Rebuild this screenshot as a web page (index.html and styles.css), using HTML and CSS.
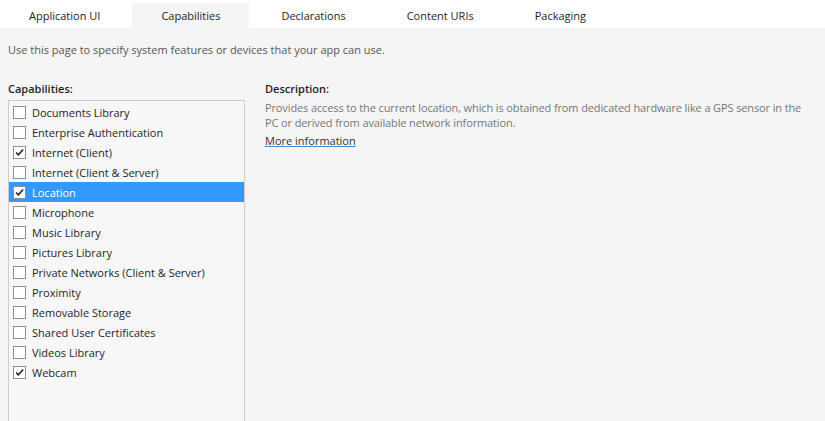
FILE: index.html
```html
<!DOCTYPE html>
<html>
<head>
<meta charset="utf-8">
<link rel="stylesheet" href="styles.css">
</head>
<body>
<div class="tabs">
  <div class="tab">Application UI</div>
  <div class="tab active">Capabilities</div>
  <div class="tab">Declarations</div>
  <div class="tab">Content URIs</div>
  <div class="tab">Packaging</div>
</div>
<div class="page">
  <p class="intro">Use this page to specify system features or devices that your app can use.</p>
  <div class="columns">
    <div class="left">
      <div class="label">Capabilities:</div>
      <div class="list">
        <div class="item"><span class="box"></span>Documents Library</div>
        <div class="item"><span class="box"></span>Enterprise Authentication</div>
        <div class="item"><span class="box checked"><svg viewBox="0 0 13 13"><path d="M2.5 6.5 L5.2 9.3 L10.8 3" /></svg></span>Internet (Client)</div>
        <div class="item"><span class="box"></span>Internet (Client &amp; Server)</div>
        <div class="item selected"><span class="box checked"><svg viewBox="0 0 13 13"><path d="M2.5 6.5 L5.2 9.3 L10.8 3" /></svg></span>Location</div>
        <div class="item"><span class="box"></span>Microphone</div>
        <div class="item"><span class="box"></span>Music Library</div>
        <div class="item"><span class="box"></span>Pictures Library</div>
        <div class="item"><span class="box"></span>Private Networks (Client &amp; Server)</div>
        <div class="item"><span class="box"></span>Proximity</div>
        <div class="item"><span class="box"></span>Removable Storage</div>
        <div class="item"><span class="box"></span>Shared User Certificates</div>
        <div class="item"><span class="box"></span>Videos Library</div>
        <div class="item"><span class="box checked"><svg viewBox="0 0 13 13"><path d="M2.5 6.5 L5.2 9.3 L10.8 3" /></svg></span>Webcam</div>
      </div>
    </div>
    <div class="right">
      <div class="label">Description:</div>
      <p class="desc">Provides access to the current location, which is obtained from dedicated hardware like a GPS sensor in the PC or derived from available network information.</p>
      <a class="more" href="#">More information</a>
    </div>
  </div>
</div>
</body>
</html>
```

FILE: styles.css
```css
html, body {
  margin: 0;
  padding: 0;
  height: 100%;
}
body {
  background: #f5f5f5;
  font-family: "Open Sans", "Noto Sans", sans-serif;
  font-size: 11px;
  color: #1e1e1e;
  display: flex;
  flex-direction: column;
  overflow: hidden;
}
.tabs {
  background: #ffffff;
  height: 28px;
  display: flex;
  align-items: flex-end;
  gap: 3px;
  flex: none;
}
.tab {
  height: 25px;
  line-height: 25px;
  padding: 0 29px;
  color: #1e1e1e;
  font-size: 11px;
}
.tab.active {
  background: #f5f5f5;
}
.page {
  flex: 1;
  padding: 0 8px;
  display: flex;
  flex-direction: column;
  min-height: 0;
}
.intro {
  margin: 14px 0 0;
  color: #555555;
  line-height: 16px;
}
.columns {
  flex: 1;
  display: flex;
  gap: 20px;
  margin-top: 23px;
  min-height: 0;
}
.left {
  width: 237px;
  display: flex;
  flex-direction: column;
}
.label {
  font-weight: 600;
  color: #1e1e1e;
  line-height: 16px;
  height: 16px;
}
.list {
  flex: 1;
  margin-top: 3px;
  border: 1px solid #cccccc;
  border-bottom: none;
  background: #f7f7f7;
  padding-top: 1px;
}
.item {
  height: 20px;
  display: flex;
  align-items: center;
  padding-left: 4px;
  color: #1e1e1e;
}
.item.selected {
  background: #3399ff;
  color: #ffffff;
}
.box {
  width: 11px;
  height: 11px;
  border: 1px solid #8e8e8e;
  background: #ffffff;
  margin-right: 6px;
  display: flex;
}
.box svg {
  width: 11px;
  height: 11px;
  fill: none;
  stroke: #222222;
  stroke-width: 1.9;
}
.right {
  flex: 1;
  display: flex;
  flex-direction: column;
}
.desc {
  margin: 3px 0 0;
  color: #777777;
  line-height: 15px;
  letter-spacing: -0.12px;
  width: 545px;
}
.more {
  margin-top: 3px;
  color: #333333;
  text-decoration: underline;
  text-decoration-color: #3a8ee6;
  line-height: 16px;
  align-self: flex-start;
}
```
